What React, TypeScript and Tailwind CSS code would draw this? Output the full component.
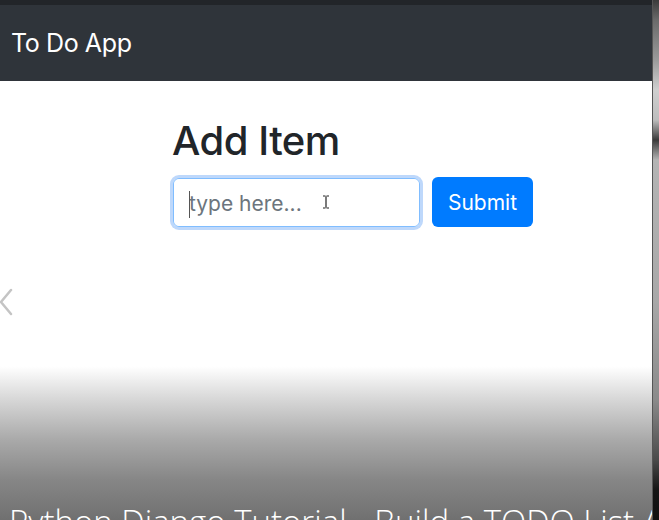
import React from 'react';

function Chevron() {
  return (
    <svg width='16' height='30' viewBox='0 0 16 30' className='absolute left-0 top-[288px]'>
      <polyline points='11,2 1,14 11,26' fill='none' stroke='#ffffff' strokeWidth='5' strokeLinecap='round' />
      <polyline points='11,2 1,14 11,26' fill='none' stroke='#c4c4c4' strokeWidth='2.5' strokeLinecap='round' />
    </svg>
  );
}

function IBeam() {
  return (
    <svg width='8' height='14' viewBox='0 0 8 14' className='absolute left-[148px] top-[16px]'>
      <path d='M1 1h2.5M4.5 1H7M4 1.5v11M1 13h2.5M4.5 13H7' stroke='#222' strokeWidth='1.2' fill='none' />
    </svg>
  );
}

export default function App() {
  return (
    <div className='relative flex h-[520px] w-[659px] overflow-hidden bg-white'>
      {/* page */}
      <div className='flex w-[652px] flex-col font-["Inter",sans-serif]'>
        <div className='h-[5px] bg-[#222529]' />
        <nav className='flex h-[76px] items-center bg-[#2f343a] px-[11px]'>
          <span className='mt-[2px] text-[25px] text-white tracking-[-0.4px]'>To Do App</span>
        </nav>
        <div className='pl-[172px] pt-[36px]'>
          <h1 className='text-[40px] font-medium leading-[1.2] tracking-[-0.5px] text-[#212529]'>Add Item</h1>
          <form className='mt-[12px] flex items-start gap-[12px]' onSubmit={(e) => e.preventDefault()}>
            <div className='relative mt-[1px] ml-[1px] h-[49px] w-[247px] rounded-[6px] border border-[#80bdff] shadow-[0_0_0_3px_#bed8fb]'>
              <span className='absolute left-[15px] top-[12px] h-[27px] w-[1px] bg-[#555]' />
              <input
                className='h-full w-full rounded-[6px] bg-white pl-[15px] pt-[2px] text-[21px] text-[#495057] outline-none placeholder:text-[#6c757d]'
                placeholder='type here...'
              />
              <IBeam />
            </div>
            <button className='h-[50px] w-[101px] rounded-[6px] bg-[#007bff] pt-[2px] text-[21px] text-white'>Submit</button>
          </form>
        </div>
      </div>
      {/* video edge */}
      <div className='w-[7px] border-l border-[#555] bg-[linear-gradient(to_bottom,#3b3b3b_0px,#6a6a6a_20px,#9a9a9a_60px,#cfcfcf_90px,#bdbdbd_120px,#3a3a3a_140px,#b4b4b4_160px,#a8a8a8_300px,#8a8a8a_400px,#4a4a4a_460px,#151515_490px,#101010_520px)]' />

      <Chevron />

      {/* bottom caption overlay */}
      <div className='absolute bottom-0 left-0 flex h-[160px] w-[652px] items-end overflow-hidden bg-[linear-gradient(to_bottom,#ffffff_0%,#ffffff_4%,#d8d8d8_24%,#a9a9a9_50%,#868686_75%,#707070_100%)]'>
        <span className='mb-[-24px] ml-[9px] whitespace-nowrap font-["Open_Sans",sans-serif] text-[33px] font-light leading-[44px] text-white'>
          Python Django Tutorial - Build a TODO List App
        </span>
      </div>
    </div>
  );
}
